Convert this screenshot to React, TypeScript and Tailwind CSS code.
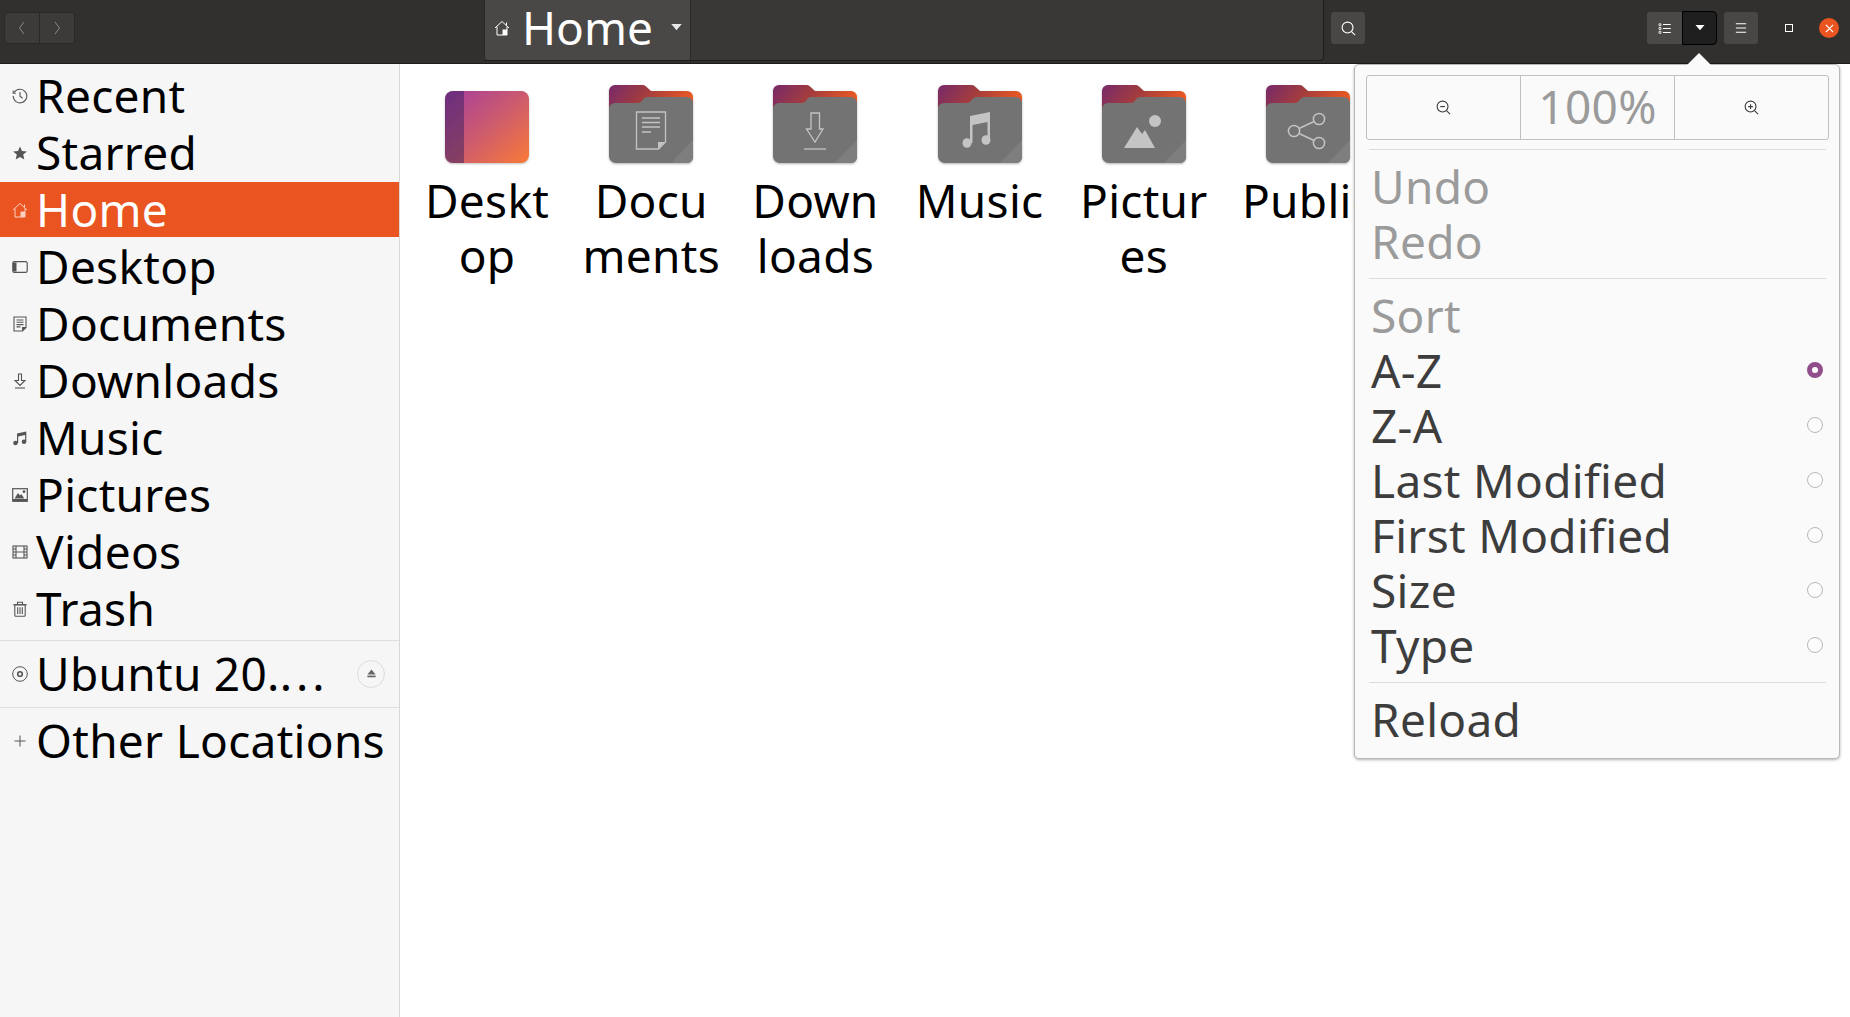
import React from 'react';

type IconProps = { className?: string };

const IconClock = ({ className }: IconProps) => (
  <svg viewBox="0 0 16 16" className={className} fill="none" stroke="currentColor" strokeWidth="1.1">
    <path d="M2.2 4.500A6.800 6.800 0 1 1 1.200 8" />
    <path d="M1.200 2.600v2.600h2.600" />
    <path d="M8 4v4.200l2.600 2" />
  </svg>
);

const IconStar = ({ className }: IconProps) => (
  <svg viewBox="0 0 16 16" className={className} fill="currentColor">
    <path d="M8 1.400l2 4.500 4.900.5-3.700 3.200 1.100 4.800L8 12l-4.300 2.400 1.100-4.800L1.100 6.400 6 5.900z" />
  </svg>
);

const IconHome = ({ className }: IconProps) => (
  <svg viewBox="0 0 16 16" className={className} fill="none" stroke="currentColor" strokeWidth="1">
    <path d="M1 8l7-6.500L15 8" />
    <path d="M3 6.500V15h10V6.500" />
    <path d="M8.500 15V9.500H13V15z" fill="currentColor" stroke="none" />
    <path d="M12.500 2.500v2.500" />
  </svg>
);

const IconDesktop = ({ className }: IconProps) => (
  <svg viewBox="0 0 16 16" className={className} fill="none" stroke="currentColor" strokeWidth="1.200">
    <rect x="0.800" y="2.600" width="14.400" height="10.800" rx="1.600" />
    <path d="M1 3.500h3.500v9H1z" fill="currentColor" stroke="none" />
  </svg>
);

const IconDoc = ({ className }: IconProps) => (
  <svg viewBox="0 0 16 16" className={className} fill="none" stroke="currentColor" strokeWidth="1.100">
    <path d="M2 1h12v10.500L10.500 15H2z" />
    <path d="M4.500 4h7M4.500 6.300h7M4.500 8.600h7M4.500 10.900h4" />
    <path d="M10 15v-4h4.500z" fill="currentColor" stroke="none" />
  </svg>
);

const IconDownload = ({ className }: IconProps) => (
  <svg viewBox="0 0 16 16" className={className} fill="none" stroke="currentColor" strokeWidth="1.100">
    <path d="M6.500 1h3v6.500H13L8 12.500 3 7.500h3.500z" />
    <path d="M3 15h10" />
  </svg>
);

const IconMusic = ({ className }: IconProps) => (
  <svg viewBox="0 0 16 16" className={className} fill="currentColor">
    <circle cx="3.500" cy="13" r="2.300" />
    <circle cx="12" cy="11.700" r="2.300" />
    <path d="M5 13V3.600L14.300 1.500v10.200h-1.200V5L6.200 6.500V13z" />
  </svg>
);

const IconPicture = ({ className }: IconProps) => (
  <svg viewBox="0 0 16 16" className={className} fill="none" stroke="currentColor" strokeWidth="1.200">
    <rect x="0.700" y="1.700" width="14.600" height="12.600" />
    <path d="M2.500 11.500L6 6l2 2.500L9.300 7l3 4.500z" fill="currentColor" stroke="none" />
    <circle cx="12" cy="4.700" r="1.400" fill="currentColor" stroke="none" />
    <path d="M1 13h14" strokeWidth="2" />
  </svg>
);

const IconFilm = ({ className }: IconProps) => (
  <svg viewBox="0 0 16 16" className={className} fill="none" stroke="currentColor" strokeWidth="1.100">
    <rect x="1" y="2" width="14" height="12" />
    <path d="M4 2v12M12 2v12M4 8h8M1 5h3M1 8h3M1 11h3M12 5h3M12 8h3M12 11h3" />
  </svg>
);

const IconTrash = ({ className }: IconProps) => (
  <svg viewBox="0 0 16 16" className={className} fill="none" stroke="currentColor" strokeWidth="1.100">
    <path d="M1.500 3.800h13" strokeWidth="1.500" />
    <path d="M5.500 3.500V1.200h5v2.300" />
    <path d="M2.800 4v10.300c0 .6.400 1 1 1h8.400c.6 0 1-.4 1-1V4" />
    <path d="M5.700 6.200v6.800M8 6.200v6.800M10.300 6.200v6.800" />
  </svg>
);

const IconDisc = ({ className }: IconProps) => (
  <svg viewBox="0 0 16 16" className={className} fill="none" stroke="currentColor">
    <circle cx="8" cy="8" r="7.300" strokeWidth="1" />
    <circle cx="8" cy="8" r="2.300" strokeWidth="1.600" />
  </svg>
);

const IconPlus = ({ className }: IconProps) => (
  <svg viewBox="0 0 16 16" className={className} fill="none" stroke="currentColor" strokeWidth="1">
    <path d="M8 2.500v11M2.500 8h11" />
  </svg>
);

const IconEject = ({ className }: IconProps) => (
  <svg viewBox="0 0 16 16" className={className} fill="currentColor">
    <path d="M8 2l6 7.500H2z" />
    <rect x="2" y="11" width="12" height="2.500" />
  </svg>
);

const IconSearch = ({ className, plus, minus }: IconProps & { plus?: boolean; minus?: boolean }) => (
  <svg viewBox="0 0 16 16" className={className} fill="none" stroke="currentColor" strokeWidth="1.200">
    <circle cx="7" cy="7" r="5.800" />
    <path d="M11.500 11.500l3.500 3.500" />
    {minus && <path d="M4.500 7h5" />}
    {plus && <path d="M4.500 7h5M7 4.500v5" />}
  </svg>
);

// folder drawn as back tab, grey front and a folded corner
function Folder({ id, children }: { id: string; children?: React.ReactNode }) {
  return (
    <svg viewBox="0 0 84 78" className="w-[84px] h-[78px] drop-shadow-[0_1px_1px_rgba(0,0,0,0.3)]">
      <defs>
        <linearGradient id={id} x1="0" y1="0" x2="1" y2="0.35">
          <stop offset="0" stopColor="#77296a" />
          <stop offset="0.45" stopColor="#a23c3e" />
          <stop offset="1" stopColor="#ee5a20" />
        </linearGradient>
      </defs>
      <path d="M0 40V6a6 6 0 0 1 6-6h28a4 4 0 0 1 3 1.500L42 6h36a6 6 0 0 1 6 6v28z" fill={`url(#${id})`} />
      <path d="M0 24a6 6 0 0 1 6-6h23c2 0 3-1 4.500-3 1.500-2 3-3 5-3H78a6 6 0 0 1 6 6v54a6 6 0 0 1-6 6H7a7 7 0 0 1-7-7z" fill="#737373" />
      <path d="M84 55v17a6 6 0 0 1-6 6H62z" fill="#7e7e7e" />
      {children}
    </svg>
  );
}

function DesktopTile() {
  return (
    <svg viewBox="0 0 84 78" className="w-[84px] h-[78px] drop-shadow-[0_1px_1px_rgba(0,0,0,0.25)]">
      <defs>
        <linearGradient id="tile" x1="0" y1="0" x2="1" y2="1">
          <stop offset="0" stopColor="#a63d9e" />
          <stop offset="0.5" stopColor="#cc5b6e" />
          <stop offset="1" stopColor="#f97a38" />
        </linearGradient>
      </defs>
      <rect x="0" y="6" width="84" height="72" rx="8" fill="url(#tile)" />
      <path d="M8 6h11v72H8a8 8 0 0 1-8-8V14a8 8 0 0 1 8-8z" fill="#2a1a5e" fillOpacity="0.45" />
    </svg>
  );
}

const sidebarItems = [
  { label: 'Recent', icon: IconClock },
  { label: 'Starred', icon: IconStar },
  { label: 'Home', icon: IconHome, active: true },
  { label: 'Desktop', icon: IconDesktop },
  { label: 'Documents', icon: IconDoc },
  { label: 'Downloads', icon: IconDownload },
  { label: 'Music', icon: IconMusic },
  { label: 'Pictures', icon: IconPicture },
  { label: 'Videos', icon: IconFilm },
  { label: 'Trash', icon: IconTrash },
];

function SidebarRow({ label, icon: Icon, active }: { label: string; icon: React.FC<IconProps>; active?: boolean }) {
  return (
    <div className={`flex items-center h-[55px] mb-[2px] pl-[12px] ${active ? 'bg-[#e95420] text-white' : 'text-black'}`}>
      <Icon className={`w-[16px] h-[16px] shrink-0 ${active ? 'text-[#fbd0c0]' : 'text-[#555]'}`} />
      <span className="ml-[8px]">{label}</span>
    </div>
  );
}

const folders: { name: string[]; emblem: React.ReactNode | null }[] = [
  { name: ['Deskt', 'op'], emblem: null },
  {
    name: ['Docu', 'ments'],
    emblem: (
      <g fill="none" stroke="#c4c4c4" strokeWidth="1.300">
        <path d="M27.500 27h29v30l-7 7h-22z" />
        <path d="M33 33h18M33 37.500h18M33 42h18M33 47h9" />
        <path d="M49 64v-7h7z" fill="#c4c4c4" stroke="none" />
      </g>
    ),
  },
  {
    name: ['Down', 'loads'],
    emblem: (
      <g fill="none" stroke="#c4c4c4" strokeWidth="1.300">
        <path d="M38 28h8.500v16H50l-8 13-8.500-13H38z" />
        <path d="M31 64h22" />
      </g>
    ),
  },
  {
    name: ['Music'],
    emblem: (
      <g fill="#c4c4c4">
        <ellipse cx="29" cy="58" rx="4.500" ry="4.800" />
        <ellipse cx="48" cy="55" rx="4.500" ry="4.800" />
        <path d="M32 58V31l20-4v28h-2.500V37L34.500 40v18z" />
      </g>
    ),
  },
  {
    name: ['Pictur', 'es'],
    emblem: (
      <g fill="#c4c4c4">
        <circle cx="53" cy="36" r="6" />
        <path d="M22 63l13-21 5 7 3-4 10 18z" />
      </g>
    ),
  },
  {
    name: ['Public'],
    emblem: (
      <g fill="none" stroke="#c4c4c4" strokeWidth="1.500">
        <circle cx="53" cy="34" r="5.600" />
        <circle cx="53" cy="58" r="5.600" />
        <circle cx="28" cy="46" r="5.600" />
        <path d="M33 43.500l15-7M33 48.500l15 7" />
      </g>
    ),
  },
];

function FolderItem({ name, emblem, index }: { name: string[]; emblem: React.ReactNode | null; index: number }) {
  return (
    <div className="w-[164.200px] shrink-0 flex flex-col items-center">
      {emblem ? <Folder id={`back${index}`}>{emblem}</Folder> : <DesktopTile />}
      <div className="mt-[10px] text-center text-black">
        {name.map((line) => (
          <div key={line} className="h-[55px]">{line}</div>
        ))}
      </div>
    </div>
  );
}

function HeaderBar() {
  return (
    <header className="h-[64px] shrink-0 flex items-start bg-[#322f2f] border-b border-[#1e1c1c]">
      <div className="mt-[12px] ml-[4px] flex w-[71px] h-[32px] rounded-[4px] border border-[#2a2828] bg-[#3c3b3a] text-[#8a8a89]">
        <div className="flex-1 flex items-center justify-center border-r border-[#2a2828]">
          <svg viewBox="0 0 16 16" className="w-[16px] h-[16px]" fill="none" stroke="currentColor" strokeWidth="1">
            <path d="M10 2L5.500 8l4.500 6" />
          </svg>
        </div>
        <div className="flex-1 flex items-center justify-center">
          <svg viewBox="0 0 16 16" className="w-[16px] h-[16px]" fill="none" stroke="currentColor" strokeWidth="1">
            <path d="M6 2l4.500 6L6 14" />
          </svg>
        </div>
      </div>

      <div className="ml-[409px] flex w-[840px] h-[61px] bg-[#3a3836] border-r border-b border-[#1e1c1c] rounded-br-[4px]">
        <div className="flex items-center w-[207px] h-full pb-[5px] bg-[#4a4846] border-l border-r border-[#2a2828] rounded-bl-[4px] text-white">
          <IconHome className="ml-[9px] w-[16px] h-[16px] shrink-0" />
          <span className="ml-[12px] tracking-normal">Home</span>
          <svg viewBox="0 0 12 8" className="ml-[18px] w-[11px] h-[7px] shrink-0" fill="#e8e8e8">
            <path d="M0 0h12L6 7z" />
          </svg>
        </div>
      </div>

      <button className="mt-[12px] ml-[7px] w-[34px] h-[32px] rounded-[3px] bg-[#484746] flex items-center justify-center text-white">
        <IconSearch className="w-[15px] h-[15px]" />
      </button>

      <div className="mt-[11px] ml-[282px] flex h-[34px]">
        <button className="w-[35px] h-[32px] mt-[1px] rounded-l-[3px] bg-[#4a4948] flex items-center justify-center text-white">
          <svg viewBox="0 0 16 14" className="w-[13px] h-[11px]" fill="none" stroke="currentColor" strokeWidth="1.300">
            <path d="M6 2h10M6 7h10M6 12h10" />
            <path d="M1 1h2.500v2.500H1zM1 5.800h2.500v2.500H1zM1 10.600h2.500v2.500H1z" strokeWidth="1" />
          </svg>
        </button>
        <button className="w-[35px] rounded-r-[4px] bg-[#1f1f1f] border border-black flex items-center justify-center">
          <svg viewBox="0 0 12 8" className="w-[10px] h-[6px]" fill="white">
            <path d="M0 0h12L6 7z" />
          </svg>
        </button>
      </div>

      <button className="mt-[12px] ml-[7px] w-[34px] h-[32px] rounded-[3px] bg-[#484746] flex items-center justify-center text-white">
        <svg viewBox="0 0 16 14" className="w-[14px] h-[12px]" fill="none" stroke="currentColor" strokeWidth="1.300">
          <path d="M2 2h12M2 7h12M2 12h12" />
        </svg>
      </button>

      <div className="mt-[24px] ml-[27px] w-[8px] h-[8px] border border-white" />

      <div className="mt-[18px] ml-[26px] w-[20px] h-[20px] rounded-full bg-[#e95420] flex items-center justify-center">
        <svg viewBox="0 0 10 10" className="w-[9px] h-[9px]" fill="none" stroke="white" strokeWidth="1.400">
          <path d="M1 1l8 8M9 1L1 9" />
        </svg>
      </div>
    </header>
  );
}

function ZoomMenu() {
  const rowClass = 'h-[55px] flex items-center pl-[16px] pr-[16px] justify-between';
  const sortOptions = ['A-Z', 'Z-A', 'Last Modified', 'First Modified', 'Size', 'Type'];
  return (
    <div className="absolute left-[1354px] top-[64px] w-[486px] h-[695px] pt-[10px] bg-[#fafafa] border border-[#b8b8b8] rounded-[5px] shadow-[0_1px_3px_rgba(0,0,0,0.3)] text-[#3d3d3d]">
      {/* little arrow above the popover */}
      <svg viewBox="0 0 24 12" className="absolute left-[332px] top-[-12px] w-[24px] h-[12px]" fill="#fafafa">
        <path d="M0 12L12 0l12 12z" />
      </svg>

      <div className="ml-[11px] mr-[10px] flex h-[65px] border border-[#c0c0c0] rounded-[3px]">
        <div className="w-[154px] flex items-center justify-center border-r border-[#c0c0c0]">
          <IconSearch minus className="w-[15px] h-[15px]" />
        </div>
        <div className="w-[154px] pb-[2px] flex items-center justify-center border-r border-[#c0c0c0] text-[#9b9b9b]">100%</div>
        <div className="flex-1 flex items-center justify-center">
          <IconSearch plus className="w-[15px] h-[15px]" />
        </div>
      </div>

      <div className="ml-[14px] mr-[13px] mt-[9px] border-t border-[#dcdcdc]" />
      <div className="mt-[9px] text-[#9b9b9b]">
        <div className={rowClass}>Undo</div>
        <div className={rowClass}>Redo</div>
      </div>
      <div className="ml-[14px] mr-[13px] mt-[9px] border-t border-[#dcdcdc]" />
      <div className="mt-[9px]">
        <div className={`${rowClass} text-[#9b9b9b]`}>Sort</div>
        {sortOptions.map((opt, i) => (
          <div key={opt} className={rowClass}>
            <span>{opt}</span>
            {i === 0 ? (
              <span className="mb-[1px] w-[16px] h-[16px] rounded-full border-[5px] border-[#924d8b] bg-white" />
            ) : (
              <span className="mb-[1px] w-[16px] h-[16px] rounded-full border border-[#b8b8b8] bg-[#fcfcfc]" />
            )}
          </div>
        ))}
      </div>
      <div className="ml-[14px] mr-[13px] mt-[9px] border-t border-[#dcdcdc]" />
      <div className={`${rowClass} mt-[9px]`}>Reload</div>
    </div>
  );
}

export default function App() {
  return (
    <div className="relative w-[1850px] h-[1017px] overflow-hidden flex flex-col bg-white text-[46px] leading-[55px] tracking-[0.3px] font-['Noto_Sans','Open_Sans',sans-serif]">
      <HeaderBar />
      <div className="flex flex-1 min-h-0">
        <aside className="w-[400px] shrink-0 bg-[#f6f6f6] border-r border-[#d8d8d8] pt-[4px]">
          {sidebarItems.map((item) => (
            <SidebarRow key={item.label} {...item} />
          ))}
          <div className="mt-[4px] border-t border-[#dedede] pt-[5px] pb-[6px]">
            <div className="flex items-center h-[55px] pl-[12px] text-black">
              <IconDisc className="w-[16px] h-[16px] shrink-0 text-[#555]" />
              <span className="ml-[8px]">Ubuntu 20.<span className="tracking-[4px]">...</span></span>
              <span className="ml-auto mr-[14px] w-[28px] h-[28px] rounded-full border border-[#dcdcdc] flex items-center justify-center">
                <IconEject className="w-[11px] h-[11px] text-[#666]" />
              </span>
            </div>
          </div>
          <div className="border-t border-[#dedede] pt-[5px]">
            <SidebarRow label="Other Locations" icon={IconPlus} />
          </div>
        </aside>
        <main className="flex-1 min-w-0 overflow-hidden flex items-start pl-[5px] pt-[21px]">
          {folders.map((f, i) => (
            <FolderItem key={f.name[0]} name={f.name} emblem={f.emblem} index={i} />
          ))}
        </main>
      </div>
      <ZoomMenu />
    </div>
  );
}
